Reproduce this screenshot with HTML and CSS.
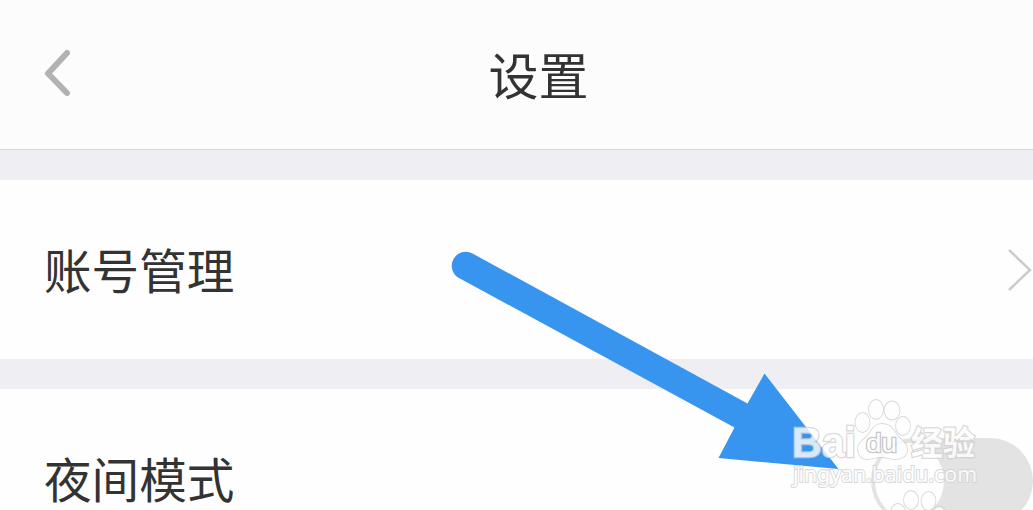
FILE: index.html
```
<!DOCTYPE html>
<html lang="zh-CN">
<head>
    <meta charset="UTF-8">
    <meta name="viewport" content="width=device-width, initial-scale=1.0">
    <title>设置</title>
    <link rel="stylesheet" href="styles.css">
</head>
<body>
    <div class="page">
        <header class="header">
            <svg class="back-icon" viewBox="0 0 30 50">
                <path d="M23 5L4 25.500L23 45"/>
            </svg>
            <h1 class="title">设置</h1>
        </header>
        <main class="settings">
            <div class="row">
                <span class="label">账号管理</span>
                <svg class="arrow-icon" viewBox="0 0 28 46">
                    <path d="M4 3L25 23L4 43"/>
                </svg>
            </div>
            <div class="row">
                <span class="label">夜间模式</span>
                <div class="switch"><div class="knob"></div></div>
            </div>
        </main>

        <svg class="overlay" viewBox="0 0 1033 510">
            <!-- pointer -->
            <path class="pointer" d="M472.500 253.500L747.500 403.500L764.500 373.500L838.500 469L718.500 458L734.500 427.500L459 278A13.800 13.800 0 0 1 472.500 253.500Z"/>
            <!-- watermark -->
            <g class="mark">
                <text class="brand" x="792" y="456.500" textLength="64" lengthAdjust="spacingAndGlyphs">Bai</text>
                <ellipse cx="862.500" cy="422.500" rx="7" ry="9.500"/>
                <ellipse cx="876" cy="409.500" rx="7" ry="9.500"/>
                <ellipse cx="892" cy="410.500" rx="7.500" ry="9"/>
                <ellipse cx="903" cy="426" rx="7" ry="9"/>
                <path d="M882 424C889 424 893 428 896 434C900 440 907 442 907 450C907 456 902 459 895 459C889 459 887 457 881 457C875 457 873 459 867 459C861 459 858 454 858 449C858 442 865 440 869 434C873 428 875 424 882 424Z"/>
                <text class="du" x="866" y="452" textLength="31" lengthAdjust="spacingAndGlyphs">du</text>
                <text class="brand-cn" x="911" y="454.500" textLength="64" lengthAdjust="spacingAndGlyphs">经验</text>
                <text class="site" x="793" y="482" textLength="184" lengthAdjust="spacingAndGlyphs">jingyan.baidu.com</text>
                <ellipse cx="911" cy="500" rx="7" ry="9"/>
                <ellipse cx="928.500" cy="501" rx="7" ry="9"/>
                <ellipse cx="898" cy="513" rx="7" ry="9"/>
                <ellipse cx="939" cy="516" rx="7" ry="9"/>
            </g>
        </svg>
    </div>
</body>
</html>
```
FILE: styles.css
```
:root {
    --page-bg: #efeef3;
    --header-bg: #fcfcfc;
    --row-bg: #fefefe;
    --text-color: #333;
    --switch-bg: #e3e3e3;
    --pointer-color: #3795f0;
}

* { box-sizing: border-box; }

body {
    margin: 0;
    font-family: "Noto Sans CJK SC", sans-serif;
    color: var(--text-color);
    background-color: var(--page-bg);
    overflow: hidden;
}
.page {
    position: relative;
    height: 510px;
    overflow: hidden;
}
.header {
    display: grid;
    grid-template-columns: 80px 1fr 80px;
    align-items: center;
    height: 150px;
    padding-left: 44px;
    background-color: var(--header-bg);
    border-bottom: 1px solid #d6d6da;
}
.back-icon {
    width: 30px;
    height: 50px;
    margin-bottom: 3px;
    fill: none;
    stroke: #b2b2b2;
    stroke-width: 6;
    stroke-linecap: round;
    stroke-linejoin: round;
}
.title {
    margin: 0 0 4px;
    text-align: center;
    font-size: 50px;
    font-weight: 400;
    line-height: 1;
}
.settings {
    display: flex;
    flex-direction: column;
    gap: 30px;
    padding-top: 30px;
}
.row {
    display: flex;
    justify-content: space-between;
    align-items: center;
    height: 179px;
    padding-left: 44px;
    background-color: var(--row-bg);
}
.label {
    margin-bottom: 1px;
    font-size: 47.600px;
    line-height: 1;
}
.arrow-icon {
    width: 28px;
    height: 46px;
    fill: none;
    stroke: #ccc;
    stroke-width: 2.5;
}
.switch {
    display: flex;
    align-items: center;
    width: 162px;
    height: 86px;
    padding-left: 4px;
    margin-top: 5px;
    border-radius: 43px;
    background-color: var(--switch-bg);
}
.knob {
    width: 69px;
    height: 76px;
    border-radius: 50%;
    background-color: var(--row-bg);
}
.overlay {
    position: absolute;
    top: 0;
    left: 0;
    width: 1033px;
    height: 510px;
}
.pointer { fill: var(--pointer-color); }
.mark {
    fill: #fff;
    stroke: #d0d0d0;
    stroke-width: 1.8;
    paint-order: stroke;
    opacity: 0.8;
}
.brand {
    font: bold 42px "Liberation Sans", sans-serif;
    stroke-width: 2.5;
}
.brand-cn {
    font: bold 33px "Noto Sans CJK SC", sans-serif;
    stroke-width: 2.5;
}
.du {
    font: 25px "Liberation Sans", sans-serif;
    stroke: #bbb;
    stroke-width: 2.5;
}
.site {
    font: 22px "Noto Sans", sans-serif;
    stroke-width: 2;
}
```
